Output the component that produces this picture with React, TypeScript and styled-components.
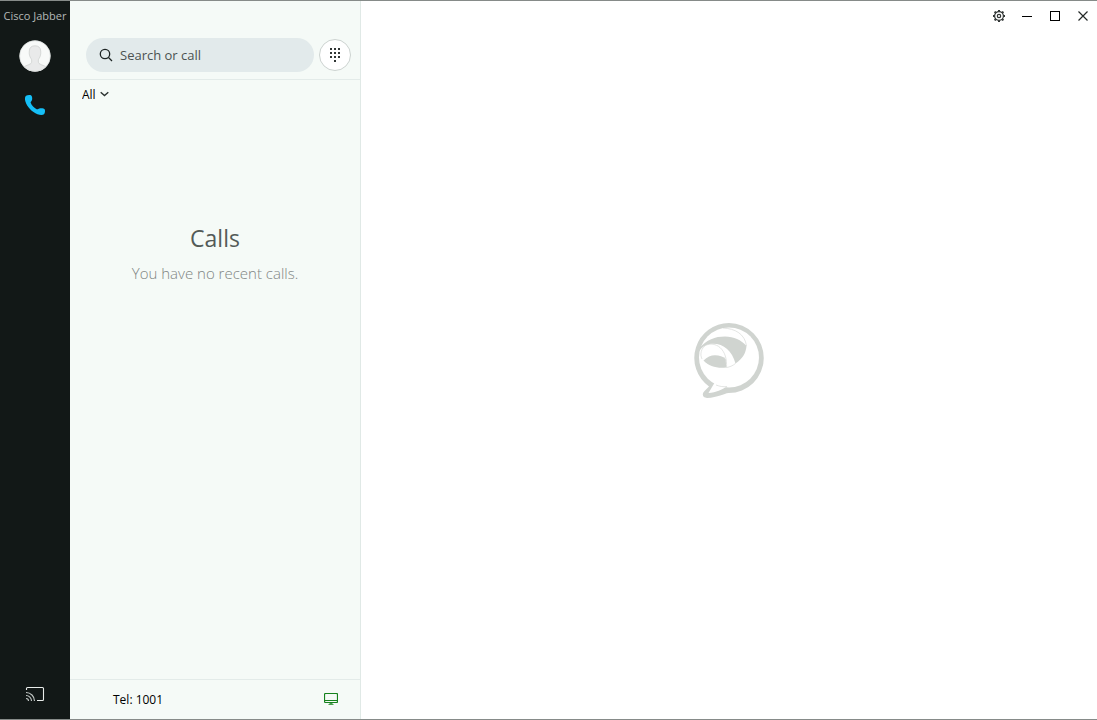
import React from "react";
import styled, { createGlobalStyle } from "styled-components";

const GlobalStyle = createGlobalStyle`
  * { box-sizing: border-box; }
  body { margin: 0; background: #ffffff; }
  body, button, input, select { font-family: "Open Sans", "Noto Sans", sans-serif; }
  h1, p { margin: 0; font-weight: 400; }
`;

const Window = styled.div`
  display: flex;
  min-height: 100vh;
  border-top: 1px solid #868b89;
  border-bottom: 1px solid #868b89;
`;

const Sidebar = styled.nav`
  display: flex;
  flex-direction: column;
  align-items: center;
  flex: 0 0 70px;
  padding-bottom: 16px;
  background: #121817;
`;

const AppName = styled.div`
  height: 39px;
  padding-top: 7px;
  font-size: 11px;
  line-height: 16px;
  white-space: nowrap;
  color: #b4b9b7;
`;

const IconButton = styled.button`
  display: flex;
  align-items: center;
  justify-content: center;
  width: 28px;
  height: 30px;
  padding: 0;
  border: 0;
  background: none;
  cursor: pointer;
`;

const AvatarButton = styled(IconButton)`
  width: 32px;
  height: 32px;
  margin-bottom: 18px;
`;

const CastButton = styled(IconButton)`
  height: 18px;
  margin-top: auto;
`;

const CallsPanel = styled.section`
  display: flex;
  flex-direction: column;
  flex: 0 0 291px;
  border-right: 1px solid #e0e9e6;
  background: #f5faf7;
`;

const SearchBar = styled.header`
  display: flex;
  align-items: center;
  gap: 5px;
  padding: 37px 9px 7px 16px;
  border-bottom: 1px solid #e3ebe9;
`;

const SearchField = styled.label`
  display: flex;
  align-items: center;
  flex: 1;
  gap: 7px;
  height: 34px;
  padding-left: 13px;
  border-radius: 17px;
  background: #e2eaeb;
`;

const SearchInput = styled.input`
  flex: 1;
  min-width: 0;
  padding: 0;
  border: 0;
  outline: 0;
  background: none;
  font-size: 13px;
  color: #3f4645;
  &::placeholder { color: #4b5251; opacity: 1; }
`;

const DialPadButton = styled(IconButton)`
  width: 32px;
  height: 32px;
  border: 1px solid #ccd3d0;
  border-radius: 50%;
  background: #ffffff;
`;

const Filter = styled.label`
  display: grid;
  align-items: center;
  justify-content: start;
  padding: 4px 12px;
  > * { grid-area: 1 / 1; }
  svg { justify-self: end; pointer-events: none; }
`;

const FilterSelect = styled.select`
  width: 27px;
  height: 20px;
  padding: 0;
  border: 0;
  appearance: none;
  background: none;
  font-size: 12px;
  color: #000000;
`;

const EmptyState = styled.div`
  flex: 1;
  padding-top: 114px;
  text-align: center;
`;

const EmptyTitle = styled.h1`
  font-size: 23px;
  line-height: 32px;
  color: #535a57;
`;

const EmptyText = styled.p`
  margin-top: 8px;
  font-size: 15px;
  font-weight: 300;
  line-height: 22px;
  color: #7f8583;
`;

const StatusBar = styled.footer`
  display: flex;
  align-items: center;
  justify-content: space-between;
  height: 40px;
  padding: 0 15px 0 43px;
  border-top: 1px solid #e3ebe9;
  font-size: 12px;
  color: #000000;
`;

const Main = styled.main`
  display: flex;
  flex-direction: column;
  flex: 1;
  min-width: 0;
  background: #ffffff;
`;

const TitleBar = styled.div`
  display: flex;
  justify-content: flex-end;
`;

const Canvas = styled.div`
  display: flex;
  align-items: center;
  justify-content: center;
  flex: 1;
  padding-bottom: 28px;
`;

const Avatar = () => (
  <svg width="32" height="32" viewBox="0 0 32 32" aria-hidden="true">
    <clipPath id="face"><circle cx="16" cy="16" r="15.5" /></clipPath>
    <circle cx="16" cy="16" r="15.5" fill="#f8faf9" />
    <path
      d="M3 29C4 26 9 25.500 12 23.500C13 22 13 20 12 18.500C10.500 16.500 10 14 10.300 11C10.500 7.500 12.500 5.800 16 5.800S21.500 7.500 21.700 11C22 14 21.500 16.500 20 18.500C19 20 19 22 20 23.500C23 25.500 28 26 29 29V34H3Z"
      fill="#e9eaea" stroke="#cfd2d1" strokeWidth=".8" clipPath="url(#face)"
    />
    <circle cx="16" cy="16" r="15.3" fill="none" stroke="#d9dddb" strokeWidth=".7" />
  </svg>
);

const Phone = () => (
  <svg width="22" height="22" viewBox="0 0 22 22" aria-hidden="true">
    <path
      d="M2 1.800C3.500 .8 5.800 .7 7 1.300C8.300 2 8.600 5.200 7.800 6.500C7.200 7.500 6.400 7.800 6.700 8.800C7.600 11.500 10.200 14 12.700 15.200C13.700 15.700 14.200 14.800 15.300 14.500C17 14 20.300 14.300 20.800 15.500C21.300 17 21 19.300 20 20.300C18.800 21.300 16 21.200 13.500 20.200C8 18 3 13 1.400 7.500C.7 5 .8 2.800 2 1.800Z"
      fill="#15bff7"
    />
  </svg>
);

const Cast = () => (
  <svg width="20" height="16" viewBox="0 0 20 16" fill="none" stroke="#e8ecea" strokeWidth="1.100" aria-hidden="true">
    <path d="M1.500 4V2.500Q1.500 1.500 2.500 1.500H17.500Q18.500 1.500 18.500 2.500V13.500Q18.500 14.500 17.500 14.500H12" />
    <path d="M1 6.500A8.500 8.500 0 0 1 9.500 15M1 9.500A5.500 5.500 0 0 1 6.500 15M1 12.500A2.500 2.500 0 0 1 3.500 15" stroke="#c5cac8" />
  </svg>
);

const Search = () => (
  <svg width="14" height="14" viewBox="0 0 14 14" fill="none" stroke="#1d2423" strokeWidth="1.300" aria-hidden="true">
    <circle cx="6" cy="6" r="4.700" />
    <path d="M9.500 9.500L13 13" />
  </svg>
);

const DialPad = () => (
  <svg width="10" height="14" viewBox="0 0 10 14" fill="#303534" aria-hidden="true">
    <path d="M0 0h2v2H0zM4 0h2v2H4zM8 0h2v2H8zM0 4h2v2H0zM4 4h2v2H4zM8 4h2v2H8zM0 8h2v2H0zM4 8h2v2H4zM8 8h2v2H8zM4 12h2v2H4z" />
  </svg>
);

const Chevron = () => (
  <svg width="9" height="6" viewBox="0 0 9 6" fill="none" stroke="#2b3230" strokeWidth="1.400" aria-hidden="true">
    <path d="M.7 1.200L4.500 4.500L8.300 1.200" />
  </svg>
);

const Monitor = () => (
  <svg width="14" height="14" viewBox="0 0 14 14" aria-hidden="true">
    <rect x=".5" y=".5" width="13" height="9" rx="1" fill="none" stroke="#16821d" strokeWidth="1.200" />
    <path d="M1 7.500H13" stroke="#16821d" />
    <path d="M5.500 10h3v1h1v1h-5v-1h1z" fill="#4a9f50" />
  </svg>
);

const Gear = () => (
  <svg width="12" height="12" viewBox="0 0 12 12" fill="none" stroke="#303534" aria-hidden="true">
    <circle cx="6" cy="6" r="4.400" strokeWidth="1.200" />
    <circle cx="6" cy="6" r="1.700" strokeWidth="1.200" />
    <path d="M6 0V1.600M6 10.400V12M0 6H1.600M10.400 6H12M1.600 1.600L2.800 2.800M9.200 9.200L10.400 10.400M1.600 10.400L2.800 9.200M9.200 2.800L10.400 1.600" strokeWidth="2" />
  </svg>
);

const Minimize = () => (
  <svg width="10" height="10" viewBox="0 0 10 10" aria-hidden="true">
    <path d="M0 5.500H10" stroke="#000000" />
  </svg>
);

const Maximize = () => (
  <svg width="10" height="10" viewBox="0 0 10 10" aria-hidden="true">
    <rect x=".5" y=".5" width="9" height="9" fill="none" stroke="#000000" />
  </svg>
);

const Close = () => (
  <svg width="10" height="10" viewBox="0 0 10 10" aria-hidden="true">
    <path d="M.5 .5L9.500 9.500M9.500 .5L.5 9.500" stroke="#242928" strokeWidth="1.200" />
  </svg>
);

const JabberLogo = () => (
  <svg width="72" height="78" viewBox="8 7 72 78" role="img" aria-label="Jabber">
    <g fill="#d0d4d0">
      <path d="M44 8A35 35 0 1 1 43.500 78C39 78.500 33 82.500 22 83C17.500 83 16.500 79 19.500 76L24 71.500A35 35 0 0 1 44 8Z" />
      <circle cx="44" cy="42.500" r="30" fill="#ffffff" />
      <path d="M30 67L23.500 78C31 77.500 37 74.500 42 71.500Z" fill="#ffffff" />
      <path d="M13.500 34C22 24.500 30 21.500 40 21.500C49 21.500 56 25 61.500 31C61 38 57.500 44 50.500 48.500C47 36 39 28.800 28 28.800C22 28.800 18 31 14 36Z" />
      <path d="M18.500 45.500C22 42 26 40.300 30 40.300C34.500 40.300 38 41.500 40.700 44L41.200 52.500C32 53.500 24 51.500 18.500 45.500Z" />
      <path
        d="M17 44C14.500 39 16.500 33 20.500 30.500C25 28 31 29 35 32.500C40 37 42 44 41.500 52.500C45 52 48 50.500 50.500 48.500M38 13C50 13.500 60 19 61.500 31"
        fill="none" stroke="#d0d4d0" strokeWidth=".6"
      />
      <path d="M31 70C35 71.500 38 72 42 71.500" fill="none" stroke="#d0d4d0" strokeWidth=".6" />
    </g>
  </svg>
);

const App = () => (
  <>
    <GlobalStyle />
    <Window>
      <Sidebar>
        <AppName>Cisco Jabber</AppName>
        <AvatarButton type="button" aria-label="Profile"><Avatar /></AvatarButton>
        <IconButton type="button" aria-label="Calls"><Phone /></IconButton>
        <CastButton type="button" aria-label="Share screen"><Cast /></CastButton>
      </Sidebar>
      <CallsPanel>
        <SearchBar>
          <SearchField>
            <Search />
            <SearchInput type="text" placeholder="Search or call" aria-label="Search or call" />
          </SearchField>
          <DialPadButton type="button" aria-label="Dial pad"><DialPad /></DialPadButton>
        </SearchBar>
        <Filter>
          <FilterSelect aria-label="Filter calls">
            <option>All</option>
          </FilterSelect>
          <Chevron />
        </Filter>
        <EmptyState>
          <EmptyTitle>Calls</EmptyTitle>
          <EmptyText>You have no recent calls.</EmptyText>
        </EmptyState>
        <StatusBar>
          <span>Tel: 1001</span>
          <IconButton type="button" aria-label="Computer for calls"><Monitor /></IconButton>
        </StatusBar>
      </CallsPanel>
      <Main>
        <TitleBar>
          <IconButton type="button" aria-label="Settings"><Gear /></IconButton>
          <IconButton type="button" aria-label="Minimize"><Minimize /></IconButton>
          <IconButton type="button" aria-label="Maximize"><Maximize /></IconButton>
          <IconButton type="button" aria-label="Close"><Close /></IconButton>
        </TitleBar>
        <Canvas><JabberLogo /></Canvas>
      </Main>
    </Window>
  </>
);

export default App;
